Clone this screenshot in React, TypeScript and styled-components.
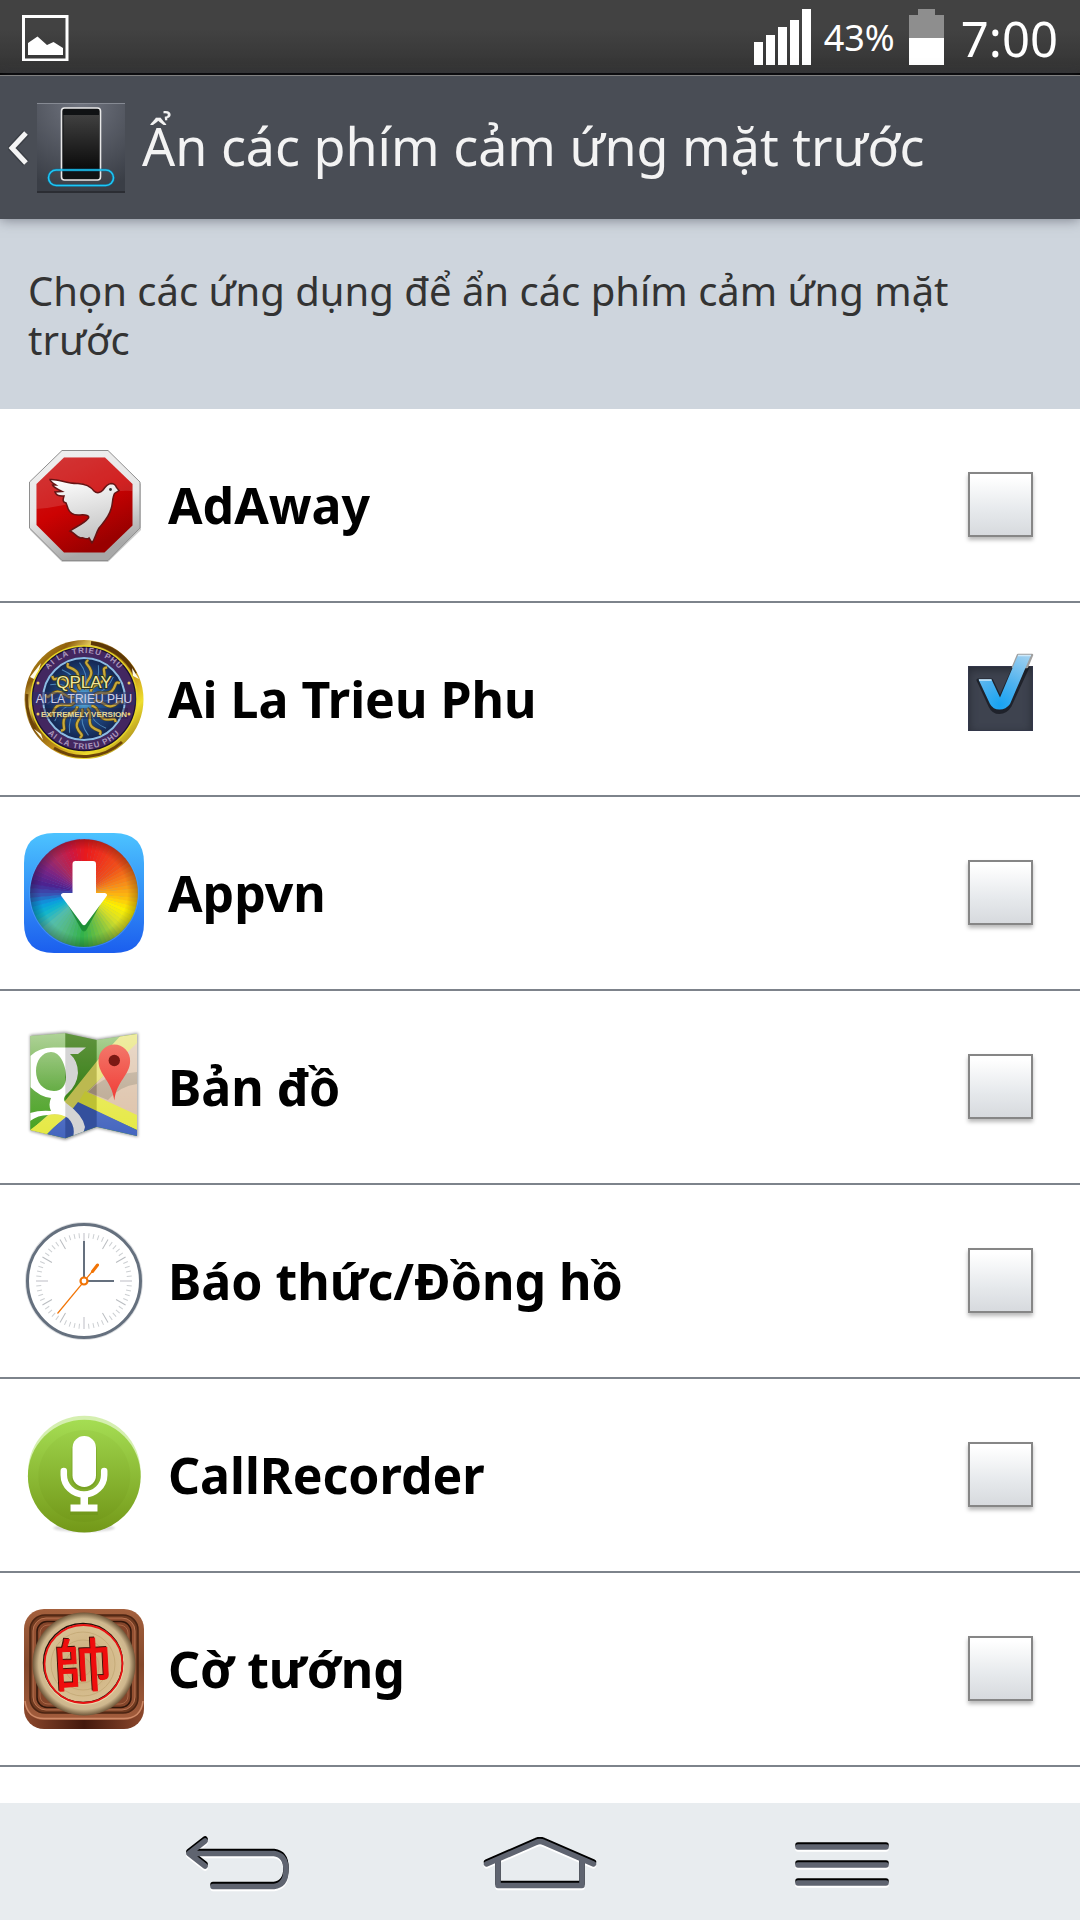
import React, { useState } from 'react';
import styled, { createGlobalStyle } from 'styled-components';

const GlobalStyle = createGlobalStyle`
  * { box-sizing: border-box; }
  body {
    margin: 0;
    background: #fff;
    font-family: "Noto Sans", "Open Sans", sans-serif;
  }
`;

const Screen = styled.div`
  display: flex;
  flex-direction: column;
  height: 100vh;
  overflow: hidden;
`;

const StatusBar = styled.div`
  flex: none;
  display: flex;
  align-items: center;
  justify-content: space-between;
  height: 75px;
  padding: 2px 22px 0;
  color: #fff;
  background: linear-gradient(#424242 40%, #333);
  border-bottom: 2px solid #000;
`;

const StatusGroup = styled.div`
  display: flex;
  align-items: center;
`;

const Percent = styled.span`
  margin: 0 14px 0 13px;
  font-size: 36px;
  line-height: 48px;
`;

const Time = styled.time`
  margin-left: 17px;
  font-size: 49px;
  line-height: 64px;
`;

const ActionBar = styled.header`
  flex: none;
  position: relative;
  display: flex;
  align-items: center;
  height: 144px;
  padding: 0 8px;
  background: #494d55;
  border-top: 1px solid #808080;
  box-shadow: 0 1px 12px rgba(60, 62, 75, 0.55);
`;

const UpButton = styled.button`
  display: flex;
  align-items: center;
  gap: 8px;
  padding: 0;
  border: 0;
  background: none;
`;

const Title = styled.h1`
  margin: 0 0 0 16px;
  padding-bottom: 4px;
  color: #f3f3f3;
  font-size: 52px;
  font-weight: 400;
  line-height: 72px;
  white-space: nowrap;
`;

const Description = styled.p`
  flex: none;
  margin: 0;
  padding: 47px 28px 45px;
  color: #333;
  background: #ced5dd;
  font-size: 40px;
  line-height: 49px;
`;

const List = styled.ul`
  flex: 1;
  min-height: 0;
  margin: 0;
  padding: 0;
  overflow: hidden;
  list-style: none;
  background: #fff;
`;

const Row = styled.li`
  border-bottom: 2px solid #7d838b;
`;

const RowLabel = styled.label`
  display: flex;
  align-items: center;
  height: 192px;
  padding: 0 47px 0 24px;
`;

const AppName = styled.span`
  flex: 1;
  margin-left: 24px;
  color: #000;
  font-size: 50px;
  font-weight: 700;
  line-height: 72px;
`;

const CheckWrap = styled.span`
  position: relative;
  display: flex;
  margin-bottom: 1px;
`;

const Check = styled.input`
  appearance: none;
  width: 65px;
  height: 65px;
  margin: 0;
  border: 2px solid #868686;
  background: linear-gradient(#fff 5%, #e6e9ec 60%, #d7dade);
  box-shadow: 0 3px 4px rgba(0, 0, 0, 0.28);
  &:checked {
    border: 1px solid #33374a;
    background: #3e434f;
    box-shadow: inset 0 3px 8px #282c36;
  }
`;

const Tick = styled.svg`
  position: absolute;
  left: 0;
  top: -15px;
  pointer-events: none;
`;

const NavBar = styled.nav`
  flex: none;
  display: flex;
  height: 117px;
  padding: 0 8%;
  background: #e8ecef;
`;

const NavButton = styled.button`
  flex: 1;
  display: flex;
  align-items: center;
  justify-content: center;
  padding: 4px 0 0;
  border: 0;
  background: none;
`;

const Icon = ({ children }: { children: React.ReactNode }) => (
  <svg width="120" height="120" viewBox="0 0 120 120" aria-hidden="true">{children}</svg>
);

const AdAwayIcon = () => (
  <Icon>
    <defs>
      <linearGradient id="adRim" x2="0.3" y2="1"><stop offset="0" stopColor="#f0f0f0" /><stop offset=".6" stopColor="#e6e6e6" /><stop offset="1" stopColor="#a8a8a8" /></linearGradient>
      <linearGradient id="adRed" x2="0.5" y2="1"><stop offset="0" stopColor="#cc1a1a" /><stop offset=".55" stopColor="#cc0202" /><stop offset="1" stopColor="#990000" /></linearGradient>
      <linearGradient id="adDove" x2="0.2" y2="1"><stop offset="0" stopColor="#fff" /><stop offset="1" stopColor="#c4c4c4" /></linearGradient>
      <clipPath id="adClip"><path d="M40 12.5H81L108.500 39V80.500L80.500 107.500H40L12.500 80V39Z" /></clipPath>
    </defs>
    <path d="M38 7H84L117 39V85L84 117H38L6 85V39Z" fill="#000" opacity=".2" />
    <path d="M38 5.500H84L116 37V83L84 115.500H38L5.500 83V37Z" fill="url(#adRim)" stroke="#8e8e8e" />
    <path d="M40 12.500H81L108.500 39V80.500L80.500 107.500H40L12.500 80V39Z" fill="url(#adRed)" />
    <path clipPath="url(#adClip)" d="M12 64Q40 62 65 53T109 46V10H12Z" fill="#fff" opacity=".13" />
    <path d="M26 34.500C34 33.500 43 39 54 38.500C63 39 67 42 70 46C73 49 77 47.500 79 45C81 42 83 39 87 38.500C91 38.500 92 41 92.500 42.500L95 45.500L90.500 48.500C88 53 89 59 87 64C85 72 79 78 75 83C72 88 71 94 68 98L65 93C62 95.500 60 92 57 93C53 93 51 88 46 86C51 82 60 79 64.500 73C66 70 60 69.500 56 70C50 70.500 45 68 43.500 62L42 58C38 57 39 54 40 51C35 51.500 32 50 31 47L38 46.500C33 44 29 42 28.500 40L32 40C29 38 26 36.500 26 34.500Z" fill="url(#adDove)" stroke="#651414" strokeWidth="1.500" />
    <circle cx="86.500" cy="44.500" r="1.400" fill="#333" />
  </Icon>
);

const MillionaireIcon = () => (
  <Icon>
    <defs>
      <linearGradient id="mGold" x1="0" y1="0" x2="1" y2="1">
        <stop offset="0" stopColor="#d8b92c" /><stop offset=".2" stopColor="#8f5f0c" /><stop offset=".3" stopColor="#e9cf62" /><stop offset=".4" stopColor="#7c4f0b" /><stop offset=".6" stopColor="#c8961c" /><stop offset=".75" stopColor="#efdf2e" /><stop offset="1" stopColor="#6e420a" />
      </linearGradient>
      <radialGradient id="mBlue"><stop offset="0" stopColor="#74d4f4" /><stop offset=".35" stopColor="#23589a" /><stop offset="1" stopColor="#14254f" /></radialGradient>
      <path id="mTop" d="M14 60A46 46 0 0 1 106 60" />
      <path id="mBottom" d="M10 60A50 50 0 0 0 110 60" />
    </defs>
    <circle cx="60" cy="60.500" r="59.500" fill="url(#mGold)" />
    <path d="M67 4A57 57 0 0 1 111 35" fill="none" stroke="#5c3807" strokeWidth="4" />
    <path d="M3 55A57 57 0 0 0 11 90M30 109A57 57 0 0 0 98 103" fill="none" stroke="#6d4408" strokeWidth="3" />
    <path d="M6 38L17 24L12 41ZM108 29L115 40L109 37ZM10 90L17 95L19 101Z" fill="#fffbe6" />
    <circle cx="60" cy="60" r="53" fill="#1a1030" stroke="#e6d526" strokeWidth="1.500" />
    <circle cx="60" cy="60" r="46.500" fill="none" stroke="#432760" strokeWidth="9" />
    <circle cx="60" cy="60" r="41" fill="url(#mBlue)" stroke="#8cbbe4" strokeWidth="2" />
    {Array.from({ length: 12 }, (_, i) => (
      <g key={i} transform={`rotate(${i * 30 + 12} 60 60)`} fill="none">
        <path d="M60 50C55 43 65 38 61 31S52 26 56 21" stroke="#5e4d16" strokeWidth="3.500" />
        <path d="M60 50C55 43 65 38 61 31S52 26 56 21" stroke="#c9a93a" strokeWidth="2.200" />
        <path d="M65 48Q72 38 67 24" stroke="#4e87b9" strokeWidth="1" />
      </g>
    ))}
    <path d="M8 53H112V66H8Z" fill="#2b3068" opacity=".5" />
    <path d="M16 69H104V80H16Z" fill="#241c3c" opacity=".35" />
    <g fontFamily="Liberation Sans, sans-serif" fontWeight="700" textAnchor="middle">
      <text fontSize="8" fill="#ab98bd" letterSpacing="1"><textPath href="#mTop" startOffset="50%">AI LA TRIEU PHU</textPath></text>
      <text fontSize="8" fill="#ab98bd" letterSpacing="1"><textPath href="#mBottom" startOffset="50%">AI LA TRIEU PHU</textPath></text>
      <text x="60" y="49" fontSize="17" fontWeight="400" fill="#f4e795" stroke="#2f3520" strokeWidth="2" paintOrder="stroke">QPLAY</text>
      <text x="60" y="64" fontSize="12" fontWeight="400" fill="#cfd0e8">AI LA TRIEU PHU</text>
      <text x="60" y="78" fontSize="8" fill="#e6d896">EXTREMELY VERSION</text>
    </g>
    <g fill="#eac560"><circle cx="14" cy="44" r="1.500" /><circle cx="105" cy="44" r="1.500" /><circle cx="14" cy="75" r="1.500" /><circle cx="105" cy="75" r="1.500" /></g>
  </Icon>
);

const wheel: [number, number[]][] = [
  [0, [232, 25, 28]], [20, [238, 45, 30]], [50, [240, 80, 25]], [75, [247, 140, 25]], [95, [252, 190, 15]], [110, [254, 240, 0]],
  [130, [215, 222, 40]], [150, [140, 198, 63]], [180, [50, 178, 74]], [205, [85, 185, 130]], [225, [85, 190, 170]], [242, [15, 180, 205]],
  [254, [10, 155, 224]], [266, [55, 85, 180]], [280, [75, 35, 145]], [300, [123, 37, 132]], [320, [170, 42, 94]], [342, [208, 23, 63]], [360, [232, 25, 28]],
];

const wheelColor = (angle: number) => {
  const i = wheel.findIndex(([a]) => a > angle);
  const [a0, c0] = wheel[i - 1];
  const [a1, c1] = wheel[i];
  const t = (angle - a0) / (a1 - a0);
  return `rgb(${c0.map((v, k) => Math.round(v + (c1[k] - v) * t)).join(',')})`;
};

const polar = (angle: number, r: number) => {
  const rad = (angle * Math.PI) / 180;
  return `${60 + r * Math.sin(rad)} ${60 - r * Math.cos(rad)}`;
};

const AppvnIcon = () => (
  <Icon>
    <defs>
      <linearGradient id="avBg" x2="0" y2="1"><stop offset="0" stopColor="#4cc3ff" /><stop offset="1" stopColor="#1b5eee" /></linearGradient>
      <radialGradient id="avEdge"><stop offset=".8" stopColor="#000" stopOpacity="0" /><stop offset="1" stopColor="#000" stopOpacity=".25" /></radialGradient>
    </defs>
    <path d="M30 0H90Q120 0 120 30V90Q120 120 90 120H30Q0 120 0 90V30Q0 0 30 0Z" fill="url(#avBg)" />
    <circle cx="60" cy="60" r="55" fill="#58a9ff" opacity=".5" />
    {Array.from({ length: 72 }, (_, i) => (
      <path key={i} d={`M60 60L${polar(i * 5, 53.8)}A53.8 53.8 0 0 1 ${polar(i * 5 + 5.6, 53.8)}Z`} fill={wheelColor(i * 5 + 1)} />
    ))}
    <circle cx="60" cy="60" r="54" fill="url(#avEdge)" />
    <path d="M44 72L57 96Q60 101 63 96L76 72Z" fill="#14862f" opacity=".8" />
    <path d="M51.500 28H69Q72 28 72 31V60H81Q84.500 61 82 64L62 91Q60 93.500 58 91L38 64Q35.500 61 39 60H48.500V31Q48.500 28 51.500 28Z" fill="#fff" />
  </Icon>
);

const MapsIcon = () => (
  <Icon>
    <defs>
      <clipPath id="mpClip"><path d="M6.300 9L41.300 6.300L72.700 13L113 7V109L72.700 99.700L41.300 111.300L6.300 103Z" /></clipPath>
      <linearGradient id="mpGreen" x2="0" y2="1"><stop offset="0" stopColor="#79b450" /><stop offset=".5" stopColor="#4b9e24" /><stop offset="1" stopColor="#38a010" /></linearGradient>
      <linearGradient id="mpPin" x2="0" y2="1"><stop offset="0" stopColor="#f3776a" /><stop offset="1" stopColor="#f03c36" /></linearGradient>
      <linearGradient id="mpShade" x2="0" y2="1"><stop offset="0" stopColor="#fff" stopOpacity=".45" /><stop offset=".55" stopColor="#fff" stopOpacity=".15" /><stop offset="1" stopColor="#fff" stopOpacity="0" /></linearGradient>
      <filter id="mpBlur" x="-10%" y="-10%" width="120%" height="120%"><feGaussianBlur stdDeviation="1.500" /></filter>
    </defs>
    <path d="M6 8L41.300 5L73 12L114 6V110L73 101L41.300 113L6 104Z" fill="#000" opacity=".4" filter="url(#mpBlur)" />
    <g clipPath="url(#mpClip)">
      <path d="M0 0H120V120H0Z" fill="url(#mpGreen)" />
      <path d="M113 14V90L60 68Z" fill="#dcc0a6" />
      <path d="M64 65Q78 50 98 47L113 45V57Q96 59 84 73Z" fill="#b7a38b" />
      <path d="M41 74L73 34L100 5H115V14L64 64L56 76L41 92L30 100L16 112L6 104L24 88Z" fill="#e3df61" />
      <path d="M61 64L113 88V103L54 76Z" fill="#e5e83e" />
      <path d="M54 75L113 103V120H20L24 105L42 90Z" fill="#3f61bd" />
      <path d="M6 103L26 88H42L22 108L12 112Z" fill="#e5e83e" />
      <path fillRule="evenodd" fill="#fff" d="M6.300 29Q15 20 31 20.500H62L54 27H46Q54 34 54 46Q53 58 44 66Q37 72 42 76Q59 88 61 100L57 114H48Q53 100 44 91Q34 85 24 88Q14 88 6 94V86Q16 83 27 84Q24 78 27 71Q16 70 6.300 60ZM27 25C18 25 12 34 12 44C12 55 19 64 30 64C38 64 42 58 42 50C42 37 36 25 27 25Z" />
      <path d="M0 0H41.300V120H0Z" fill="url(#mpShade)" />
      <path d="M41.300 0H72.700V120H41.300Z" fill="#000" opacity=".17" />
      <path d="M72.700 0H120V120H72.700Z" fill="url(#mpShade)" />
    </g>
    <path d="M90.300 73.500C88 54 74.500 48 74.500 34A15.800 16.500 0 0 1 106.100 34C106.100 48 92.500 54 90.300 73.500Z" fill="url(#mpPin)" />
    <circle cx="90.300" cy="33.500" r="5.700" fill="#7c1914" />
  </Icon>
);

const ClockIcon = () => (
  <Icon>
    <circle cx="60" cy="60" r="59" fill="#dcdee1" />
    <circle cx="60" cy="60" r="56.500" fill="#fff" stroke="#65707e" strokeWidth="3" />
    {Array.from({ length: 60 }, (_, i) => {
      const quarter = i % 15 === 0;
      const hour = i % 5 === 0;
      return (
        <path
          key={i}
          d={`M60 12V${quarter ? 24 : hour ? 23 : 17}`}
          transform={`rotate(${i * 6} 60 60)`}
          stroke={quarter ? '#dedee2' : hour ? '#b9bcc0' : '#cccfd2'}
          strokeWidth={quarter ? 2 : 1}
        />
      );
    })}
    <path d="M60 20V60H90" fill="none" stroke="#65707e" strokeWidth="2" />
    <path d="M33.500 92.500L74 43.500" stroke="#f27405" strokeWidth="1.200" />
    <path d="M68.500 50.500L73.500 44" stroke="#f27405" strokeWidth="3" strokeLinecap="round" />
    <circle cx="60" cy="60" r="3.500" fill="#fff" stroke="#f27405" strokeWidth="2.200" />
  </Icon>
);

const RecorderIcon = () => (
  <Icon>
    <defs>
      <linearGradient id="crBg" x2="0" y2="1"><stop offset="0" stopColor="#a5dd53" /><stop offset="1" stopColor="#739818" /></linearGradient>
      <linearGradient id="crInner" x2="0" y2="1"><stop offset="0" stopColor="#9cd149" /><stop offset="1" stopColor="#749a1b" /></linearGradient>
      <filter id="crBlur"><feGaussianBlur stdDeviation="1" /></filter>
    </defs>
    <ellipse cx="60" cy="113" rx="31" ry="4" fill="#000" opacity=".14" filter="url(#crBlur)" />
    <circle cx="60.300" cy="57" r="56.300" fill="#d5efb0" />
    <circle cx="60.300" cy="61.200" r="56.400" fill="url(#crBg)" />
    <circle cx="60.300" cy="61" r="46" fill="url(#crInner)" />
    <g fill="#688d18" opacity=".35" transform="translate(0 2)">
      <rect x="47.500" y="21" width="25.500" height="51" rx="12" />
      <path d="M46 89H74V98H46Z" />
    </g>
    <rect x="48.500" y="21" width="23.500" height="51" rx="11.700" fill="#fff" />
    <path d="M39.800 56V60A20.200 19.500 0 0 0 80.200 60V56" fill="none" stroke="#fff" strokeWidth="6.500" strokeLinecap="round" />
    <path d="M56.500 81H64V89.500H73.500V96.500H46.500V89.500H56.500Z" fill="#fff" />
  </Icon>
);

const ChessIcon = () => (
  <Icon>
    <defs>
      <linearGradient id="chFace" x2="0" y2="1"><stop offset="0" stopColor="#a4603d" /><stop offset=".5" stopColor="#84492c" /><stop offset="1" stopColor="#a25c3c" /></linearGradient>
      <linearGradient id="chSide"><stop offset="0" stopColor="#8c482c" /><stop offset=".5" stopColor="#44190d" /><stop offset="1" stopColor="#8c482c" /></linearGradient>
      <radialGradient id="chDisc"><stop offset="0" stopColor="#c8aa76" /><stop offset=".75" stopColor="#d8c093" /><stop offset=".88" stopColor="#cdb68d" /><stop offset="1" stopColor="#6f573a" /></radialGradient>
    </defs>
    <rect y="20" width="120" height="100" rx="20" fill="url(#chSide)" />
    <rect width="120" height="111" rx="20" fill="url(#chFace)" />
    <path d="M1 92Q3 109.500 20 109.500H100Q117 109.500 119 92" fill="none" stroke="#cf8a68" strokeWidth="1.500" />
    <rect x="6" y="6" width="108" height="98" rx="15" fill="#6f3a20" stroke="#4b2412" strokeWidth="1.500" />
    <rect x="9" y="9" width="102" height="92" rx="13" fill="#935032" stroke="#bb7552" />
    <rect x="13" y="12.500" width="94" height="86" rx="10" fill="#84452a" stroke="#32170b" strokeWidth="1.500" />
    <rect x="16" y="16" width="88" height="79" rx="8" fill="none" stroke="#aa6746" />
    <circle cx="60" cy="55" r="51.500" fill="url(#chDisc)" />
    <g fill="none" stroke="#b59963" strokeWidth=".8" opacity=".6">
      <circle cx="58" cy="58" r="9" /><circle cx="58" cy="57" r="17" /><circle cx="59" cy="56" r="25" /><circle cx="59" cy="55" r="32" />
    </g>
    <circle cx="59.500" cy="55.500" r="39.500" fill="none" stroke="#e9d6ae" strokeWidth="2" />
    <circle cx="59" cy="54" r="39.500" fill="none" stroke="#24110a" strokeWidth="1.500" />
    <circle cx="59.500" cy="55" r="39" fill="none" stroke="#ea1212" strokeWidth="1.800" />
    <g fontFamily='"Noto Sans CJK TC", sans-serif' fontSize="58" fontWeight="400" textAnchor="middle" transform="rotate(-3 60 55)">
      <text x="58" y="77" fill="#3f1109" stroke="#3f1109">帥</text>
      <text x="59" y="78" fill="#ef0d0d" stroke="#ef0d0d">帥</text>
    </g>
  </Icon>
);

const emboss = (d: string) => (
  <g fill="none" strokeWidth="5.500" strokeLinecap="round" strokeLinejoin="round">
    <path d={d} stroke="#fff" transform="translate(0 3)" />
    <path d={d} stroke="#000" transform="translate(0 -1)" />
    <path d={d} stroke="#5f6470" transform="translate(0 1)" />
  </g>
);

const apps = [
  { name: 'AdAway', icon: AdAwayIcon },
  { name: 'Ai La Trieu Phu', icon: MillionaireIcon },
  { name: 'Appvn', icon: AppvnIcon },
  { name: 'Bản đồ', icon: MapsIcon },
  { name: 'Báo thức/Đồng hồ', icon: ClockIcon },
  { name: 'CallRecorder', icon: RecorderIcon },
  { name: 'Cờ tướng', icon: ChessIcon },
];

export default function App() {
  const [hidden, setHidden] = useState<string[]>(['Ai La Trieu Phu']);
  const toggle = (name: string) =>
    setHidden((h) => (h.includes(name) ? h.filter((n) => n !== name) : [...h, name]));

  return (
    <Screen>
      <GlobalStyle />
      <StatusBar>
        <svg width="47" height="47" viewBox="0 0 47 47" aria-hidden="true">
          <path d="M1.500 2.500H45V46H1.500Z" fill="none" stroke="#fff" strokeWidth="3" />
          <path d="M6 29L15.500 22.500L25 31L31.500 28L41 34V41H6Z" fill="#fff" />
        </svg>
        <StatusGroup>
          <svg width="57" height="58" viewBox="0 0 57 58" fill="#fff" aria-hidden="true">
            <path d="M0 33H9V56H0ZM12 26H21V56H12ZM24 18H33V56H24ZM36 11H45V56H36ZM48 0H57V56H48Z" />
          </svg>
          <Percent>43%</Percent>
          <svg width="35" height="58" viewBox="0 0 35 58" aria-hidden="true">
            <path d="M9 0H26V6H35V29H0V6H9Z" fill="#8e8e8e" />
            <path d="M0 29H35V56H0Z" fill="#fff" />
          </svg>
          <Time>7:00</Time>
        </StatusGroup>
      </StatusBar>
      <ActionBar>
        <UpButton type="button" aria-label="Quay lại">
          <svg width="21" height="38" viewBox="0 0 21 38" aria-hidden="true">
            <path d="M18 4L4 19L18 34" fill="none" stroke="#2e3137" strokeWidth="8" opacity=".5" />
            <path d="M18 4L4 19L18 34" fill="none" stroke="#f4f4f4" strokeWidth="5" />
          </svg>
          <svg width="89" height="90" viewBox="0 0 89 90" aria-hidden="true">
            <defs>
              <radialGradient id="hdBg" cx=".5" cy="0" r="1"><stop offset="0" stopColor="#70747f" /><stop offset="1" stopColor="#3a3e46" /></radialGradient>
              <linearGradient id="hdScreen" x2="0" y2="1"><stop offset="0" stopColor="#404040" /><stop offset="1" stopColor="#090909" /></linearGradient>
            </defs>
            <path d="M0 0H88V90H0Z" fill="#2b2d33" />
            <path d="M0 0H88V88H0Z" fill="url(#hdBg)" />
            <path d="M0 .5H88" stroke="#868a93" />
            <rect x="24.500" y="5" width="39" height="72" rx="3" fill="#101214" stroke="#e9e9e9" strokeWidth="1.600" />
            <path d="M26.500 12H62V68H26.500Z" fill="url(#hdScreen)" />
            <rect x="11.500" y="67" width="65" height="15.500" rx="7.700" fill="none" stroke="#0876a8" strokeWidth="3" opacity=".5" />
            <rect x="11.500" y="67" width="65" height="15.500" rx="7.700" fill="none" stroke="#1cc8f6" strokeWidth="1.600" />
          </svg>
        </UpButton>
        <Title>Ẩn các phím cảm ứng mặt trước</Title>
      </ActionBar>
      <Description>Chọn các ứng dụng để ẩn các phím cảm ứng mặt trước</Description>
      <List>
        {apps.map(({ name, icon: AppIcon }) => (
          <Row key={name}>
            <RowLabel>
              <AppIcon />
              <AppName>{name}</AppName>
              <CheckWrap>
                <Check type="checkbox" checked={hidden.includes(name)} onChange={() => toggle(name)} />
                {hidden.includes(name) && (
                  <Tick width="68" height="66" viewBox="0 -16 68 66" aria-hidden="true">
                    <defs>
                      <radialGradient id="tick" gradientUnits="userSpaceOnUse" cx="32" cy="38" r="56"><stop offset="0" stopColor="#17a3f2" /><stop offset=".45" stopColor="#4fb2ee" /><stop offset="1" stopColor="#9fd0f0" /></radialGradient>
                    </defs>
                    <path d="M10 13H23.500L32 31L46 0H60L42 39Q38 45.500 31.500 45.500T22 39Z" fill="#15181f" stroke="#15181f" strokeWidth="3" strokeLinejoin="round" opacity=".75" />
                    <path d="M45 0L50 -12H64L59 0Z" fill="#999" stroke="#a0a0a0" strokeWidth="2.500" strokeLinejoin="round" />
                    <path d="M10.500 12.500H23.500L32 30.500L50 -12H63L42 37Q38 42.500 31.500 42.500T22 37Z" fill="url(#tick)" />
                    <path d="M11 13H23.500M50 -11.500H63" stroke="#cfe9fa" strokeWidth="1.500" />
                  </Tick>
                )}
              </CheckWrap>
            </RowLabel>
          </Row>
        ))}
      </List>
      <NavBar>
        <NavButton type="button" aria-label="Trở lại">
          <svg width="106" height="56" viewBox="0 0 106 56">{emboss('M20 4L4 16.500L20 29M5 16.500H89Q101 18 101 33T89 49.500H28')}</svg>
        </NavButton>
        <NavButton type="button" aria-label="Màn hình chính">
          <svg width="114" height="54" viewBox="0 0 114 54">{emboss('M3.500 26L53 4.500Q57 2.500 61 4.500L110.500 26M15 23V47.500H99V23')}</svg>
        </NavButton>
        <NavButton type="button" aria-label="Trình đơn">
          <svg width="94" height="48" viewBox="0 0 94 48">{emboss('M3 6H91M3 24H91M3 42H91')}</svg>
        </NavButton>
      </NavBar>
    </Screen>
  );
}
